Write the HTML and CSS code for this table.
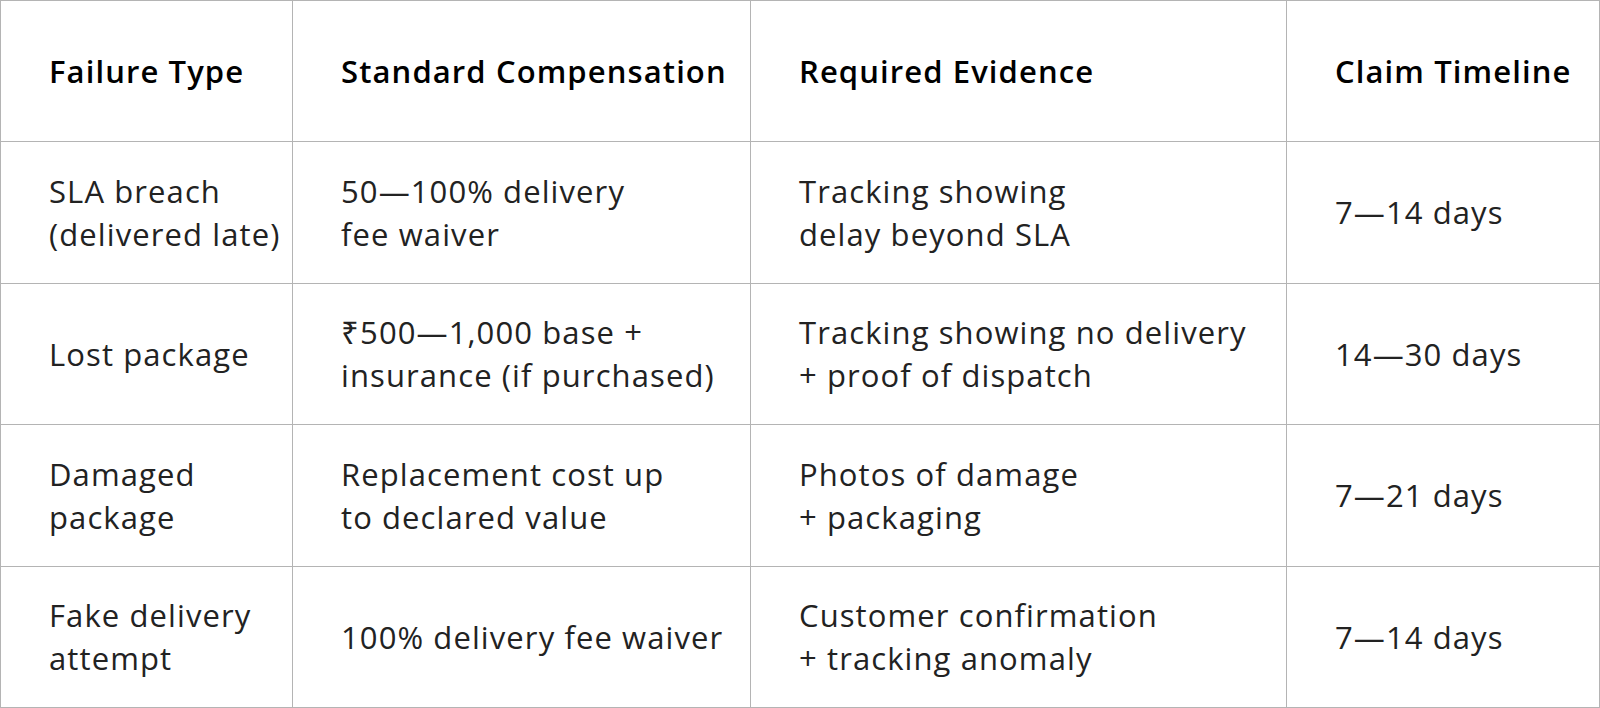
FILE: index.html
```html
<!DOCTYPE html>
<html lang="en">
<head>
<meta charset="utf-8">
<title>Compensation Table</title>
<link rel="stylesheet" href="styles.css">
</head>
<body>
<div class="table">
  <div class="cell head">Failure Type</div>
  <div class="cell head">Standard Compensation</div>
  <div class="cell head">Required Evidence</div>
  <div class="cell head">Claim Timeline</div>

  <div class="cell">SLA breach<br>(delivered late)</div>
  <div class="cell">50—100% delivery<br>fee waiver</div>
  <div class="cell">Tracking showing<br>delay beyond SLA</div>
  <div class="cell">7—14 days</div>

  <div class="cell">Lost package</div>
  <div class="cell">₹500—1,000 base +<br>insurance (if purchased)</div>
  <div class="cell">Tracking showing no delivery<br>+ proof of dispatch</div>
  <div class="cell">14—30 days</div>

  <div class="cell">Damaged<br>package</div>
  <div class="cell">Replacement cost up<br>to declared value</div>
  <div class="cell">Photos of damage<br>+ packaging</div>
  <div class="cell">7—21 days</div>

  <div class="cell">Fake delivery<br>attempt</div>
  <div class="cell">100% delivery fee waiver</div>
  <div class="cell">Customer confirmation<br>+ tracking anomaly</div>
  <div class="cell">7—14 days</div>
</div>
</body>
</html>
```

FILE: styles.css
```css
html, body {
  margin: 0;
  padding: 0;
  background: #ffffff;
}
body {
  width: 1600px;
  height: 708px;
  overflow: hidden;
  font-family: "Open Sans", "Liberation Sans", sans-serif;
}
.table {
  display: grid;
  grid-template-columns: 292px 458px 536px 313px;
  grid-template-rows: 141px 142px 141px 142px 141px;
  border-top: 1px solid #b4b4b4;
  border-left: 1px solid #b4b4b4;
  width: 1600px;
  box-sizing: border-box;
}
.cell {
  box-sizing: border-box;
  border-right: 1px solid #b4b4b4;
  border-bottom: 1px solid #b4b4b4;
  display: flex;
  align-items: center;
  padding: 0 0 0 48px;
  font-size: 31px;
  line-height: 43px;
  color: #222222;
  letter-spacing: 1.1px;
  white-space: nowrap;
}
.head {
  font-weight: 600;
  color: #000000;
  letter-spacing: 1.1px;
}
```
